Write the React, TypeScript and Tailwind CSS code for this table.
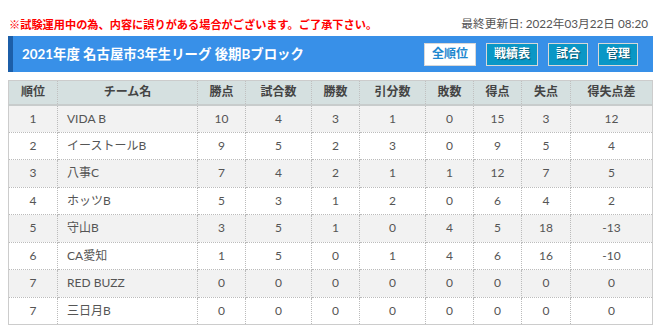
const cols = [
  { label: "順位", w: "w-[49px]" },
  { label: "チーム名", w: "w-[140px]" },
  { label: "勝点", w: "w-[48px]" },
  { label: "試合数", w: "w-[66px]" },
  { label: "勝数", w: "w-[48px]" },
  { label: "引分数", w: "w-[66px]" },
  { label: "敗数", w: "w-[48px]" },
  { label: "得点", w: "w-[48px]" },
  { label: "失点", w: "w-[49px]" },
  { label: "得失点差", w: "w-[82px]" },
];

const rows: (string | number)[][] = [
  [1, "VIDA B", 10, 4, 3, 1, 0, 15, 3, 12],
  [2, "イーストールB", 9, 5, 2, 3, 0, 9, 5, 4],
  [3, "八事C", 7, 4, 2, 1, 1, 12, 7, 5],
  [4, "ホッツB", 5, 3, 1, 2, 0, 6, 4, 2],
  [5, "守山B", 3, 5, 1, 0, 4, 5, 18, -13],
  [6, "CA愛知", 1, 5, 0, 1, 4, 6, 16, -10],
  [7, "RED BUZZ", 0, 0, 0, 0, 0, 0, 0, 0],
  [7, "三日月B", 0, 0, 0, 0, 0, 0, 0, 0],
];

function NavButton({ label, active }: { label: string; active?: boolean }) {
  return (
    <button
      className={
        active
          ? "h-[23px] px-[7px] border border-[#d8d8d8] bg-white text-[#1e88cf] text-[12px] font-bold"
          : "h-[23px] px-[7px] border border-[#d8d8d8] bg-[#0a97c6] text-white text-[12px] font-bold [text-shadow:1px_1px_1px_rgba(0,0,0,0.45)]"
      }
    >
      {label}
    </button>
  );
}

export default function App() {
  return (
    <div className="w-[665px] h-[331px] bg-white font-['Lato','Noto_Sans_CJK_JP',sans-serif] text-[#555]">
      <div className="flex items-end justify-between pl-[9px] pr-[17px] pt-[15px] h-[36px] pb-[6px]">
        <span className="text-[11.2px] font-bold text-[#ff0000] leading-none">
          ※試験運用中の為、内容に誤りがある場合がございます。ご了承下さい。
        </span>
        <span className="text-[11.7px] text-[#555] leading-none">最終更新日: 2022年03月22日 08:20</span>
      </div>

      <div className="mx-[8px] w-[645px] h-[36px] flex items-center bg-[#3890e8] border-l-[5px] border-[#1c5ea8] pl-[9px] pr-[15px]">
        <h1 className="text-white font-bold text-[13.4px] flex-1">2021年度 名古屋市3年生リーグ 後期Bブロック</h1>
        <div className="flex gap-[10px]">
          <NavButton label="全順位" active />
          <NavButton label="戦績表" />
          <NavButton label="試合" />
          <NavButton label="管理" />
        </div>
      </div>

      <div className="mx-[8px] mt-[8px] w-[645px]">
        <table className="w-[645px] border-collapse table-fixed border border-[#ccc] text-[12px]">
          <thead>
            <tr className="h-[24px] bg-[#d5e0e0] border-b-2 border-[#c8cccc]">
              {cols.map((c) => (
                <th
                  key={c.label}
                  className={`${c.w} font-bold text-[#444] text-center border-x border-dotted border-[#c0c0c0]`}
                >
                  {c.label}
                </th>
              ))}
            </tr>
          </thead>
          <tbody>
            {rows.map((r, i) => (
              <tr key={i} className={i % 2 === 0 ? "h-[27.5px] bg-[#f2f2f2]" : "h-[27.5px] bg-white"}>
                {r.map((v, j) => (
                  <td
                    key={j}
                    className={
                      j === 1
                        ? "text-left pl-[9px] border border-dotted border-[#bbb]"
                        : "text-center border border-dotted border-[#bbb]"
                    }
                  >
                    {v}
                  </td>
                ))}
              </tr>
            ))}
          </tbody>
        </table>
      </div>
    </div>
  );
}
